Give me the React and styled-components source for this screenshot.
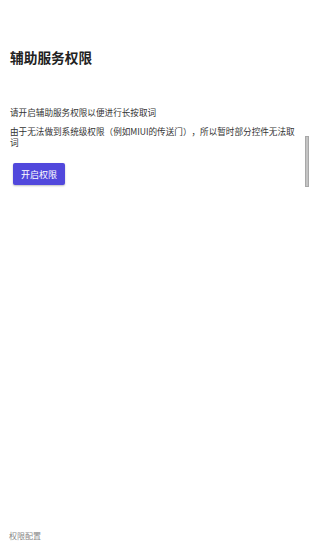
import styled, { createGlobalStyle } from 'styled-components';

const GlobalStyle = createGlobalStyle`
    html, body {
        margin: 0;
        padding: 0;
        background: #fff;
    }
    body {
        font-family: "Noto Sans CJK SC", "Noto Sans", sans-serif;
        text-spacing-trim: space-all;
    }
`;

const App = () => {
    return (
        <Page>
            <GlobalStyle />
            <Content>
                <Title>辅助服务权限</Title>
                <Paragraph>请开启辅助服务权限以便进行长按取词</Paragraph>
                <Paragraph>由于无法做到系统级权限（例如MIUI的传送门），所以暂时部分控件无法取词</Paragraph>
                <OpenButton>开启权限</OpenButton>
            </Content>
            <Footer>权限配置</Footer>
            <ScrollThumb />
        </Page>
    );
};

// styled components
const Page = styled.div`
    position: relative;
    display: flex;
    flex-direction: column;
    width: 310px;
    height: 551px;
    overflow: hidden;
    background: #fff;
`;
const Content = styled.div`
    flex: 1;
    display: flex;
    flex-direction: column;
    align-items: flex-start;
    padding: 49px 12px 0 10px;
`;
const Title = styled.h1`
    margin: 0 0 42px;
    font-size: 13.7px;
    line-height: 16px;
    font-weight: 700;
    color: #222;
`;
const Paragraph = styled.p`
    margin: 0 0 8px;
    font-size: 8.6px;
    line-height: 11px;
    color: #333;
`;
const OpenButton = styled.button`
    margin: 7px 0 0 3px;
    width: 52px;
    height: 22px;
    padding: 0;
    border: none;
    border-radius: 2px;
    background: #5148dc;
    box-shadow: 0 1px 2px rgba(0, 0, 0, 0.25);
    color: #fff;
    font-family: inherit;
    font-size: 9px;
`;
const Footer = styled.div`
    padding: 0 0 10px 9px;
    font-size: 8px;
    line-height: 10px;
    color: #888;
`;
const ScrollThumb = styled.div`
    position: absolute;
    top: 136px;
    right: 1px;
    width: 2px;
    height: 49px;
    background: #c4c4c4;
    border: 1px solid #a8a8a8;
`;

export default App;
